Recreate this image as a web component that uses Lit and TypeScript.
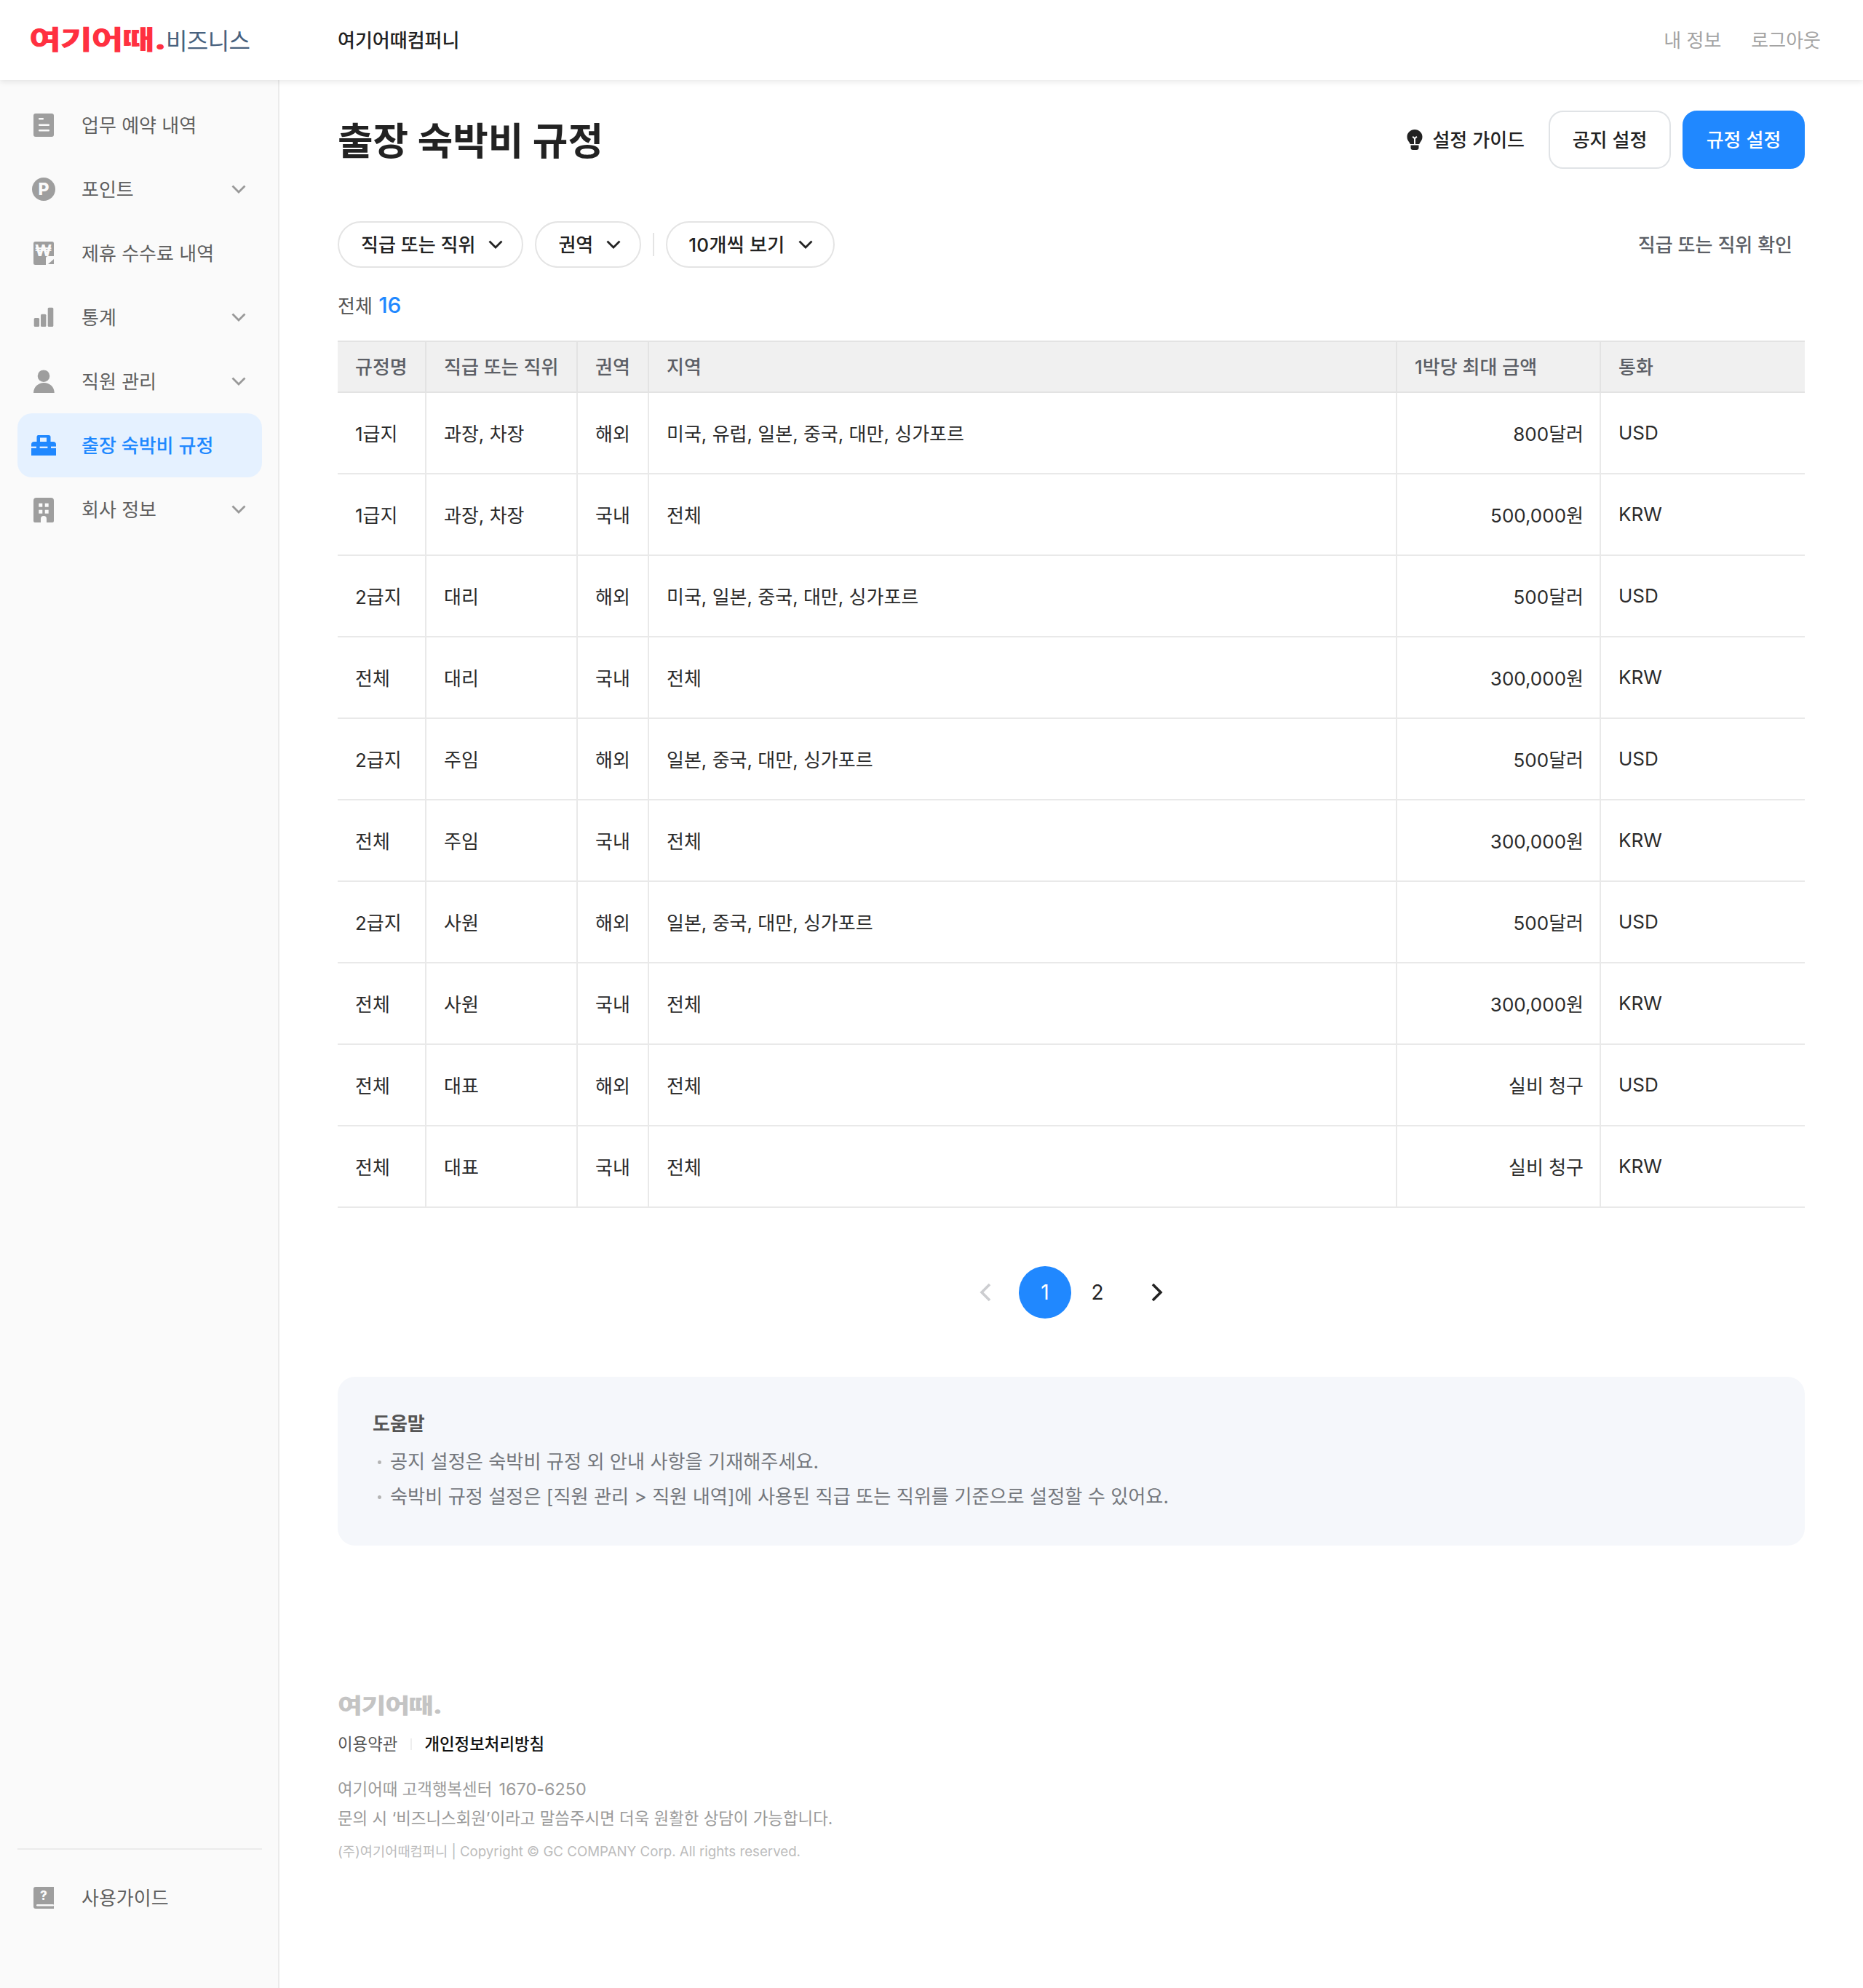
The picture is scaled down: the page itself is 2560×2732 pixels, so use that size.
import { LitElement, html, css, svg } from 'lit';
import { customElement } from 'lit/decorators.js';

const GRAY = '#9e9e9e';

const icons: Record<string, unknown> = {
  doc: svg`<rect x="10" y="8" width="28" height="32" rx="3" fill="${GRAY}"/>
    <rect x="17" y="14" width="7" height="2.4" rx="1" fill="#fafafa"/>
    <rect x="17" y="22.6" width="15" height="2.4" rx="1" fill="#fafafa"/>
    <rect x="17" y="30" width="15" height="2.4" rx="1" fill="#fafafa"/>`,
  point: svg`<circle cx="24" cy="24" r="16" fill="${GRAY}"/>
    <text x="24" y="32" text-anchor="middle" font-size="23" font-weight="800" fill="#fafafa">P</text>`,
  fee: svg`<rect x="10" y="8" width="28" height="32" rx="2.500" fill="${GRAY}"/>
    <path d="M30 28h8v12H27V31a3 3 0 0 1 3-3z" fill="#fafafa"/>
    <path d="M38 32v7h-8z" fill="${GRAY}"/>
    <text x="23.500" y="28" text-anchor="middle" font-size="22" font-weight="800" fill="#fafafa">₩</text>`,
  stats: svg`<rect x="10.7" y="25" width="7.4" height="12" rx="1.5" fill="${GRAY}"/>
    <rect x="20" y="19.7" width="7.4" height="17.3" rx="1.5" fill="${GRAY}"/>
    <rect x="29.7" y="10.7" width="7.6" height="26.3" rx="1.5" fill="${GRAY}"/>`,
  person: svg`<circle cx="24" cy="16.7" r="8.3" fill="${GRAY}"/>
    <path d="M10 40c0-8.500 7-14 14.300-14 7.700 0 14.400 5.500 14.400 14z" fill="${GRAY}"/>`,
  case: svg`<path fill-rule="evenodd" d="M16 10h15a2.500 2.500 0 0 1 2.500 2.500V19H37a4 4 0 0 1 4 4v15H7V23a4 4 0 0 1 4-4h3.500v-6.500A2.500 2.500 0 0 1 16 10zm3 3.500V19h9v-5.500z" fill="#2088ff"/>
    <rect x="7" y="25.600" width="34" height="2.300" fill="#e5f1ff"/>
    <rect x="14" y="23.500" width="4.600" height="6.400" fill="#2088ff"/>
    <rect x="29.400" y="23.500" width="4.600" height="6.400" fill="#2088ff"/>`,
  office: svg`<path d="M14 8h20a4 4 0 0 1 4 4v28a2 2 0 0 1-2 2h-8v-5a4 4 0 0 0-8 0v5h-8a2 2 0 0 1-2-2V12a4 4 0 0 1 4-4z" fill="${GRAY}"/>
    <rect x="17.300" y="15.700" width="5" height="5" fill="#fafafa"/>
    <rect x="25.700" y="15.700" width="5" height="5" fill="#fafafa"/>
    <rect x="17.300" y="24.700" width="5" height="5" fill="#fafafa"/>
    <rect x="25.700" y="24.700" width="5" height="5" fill="#fafafa"/>`,
  guide: svg`<path d="M13 9h25v30H13a3 3 0 0 1-3-3V12a3 3 0 0 1 3-3z" fill="${GRAY}"/>
    <rect x="14" y="33" width="24" height="2.600" rx="1.300" fill="#fafafa"/>
    <text x="24" y="27" text-anchor="middle" font-size="17" font-weight="800" fill="#fafafa">?</text>`,
};

const navItems = [
  { icon: 'doc', label: '업무 예약 내역' },
  { icon: 'point', label: '포인트', more: true },
  { icon: 'fee', label: '제휴 수수료 내역' },
  { icon: 'stats', label: '통계', more: true },
  { icon: 'person', label: '직원 관리', more: true },
  { icon: 'case', label: '출장 숙박비 규정', active: true },
  { icon: 'office', label: '회사 정보', more: true },
];

const rows = [
  ['1급지', '과장, 차장', '해외', '미국, 유럽, 일본, 중국, 대만, 싱가포르', '800달러', 'USD'],
  ['1급지', '과장, 차장', '국내', '전체', '500,000원', 'KRW'],
  ['2급지', '대리', '해외', '미국, 일본, 중국, 대만, 싱가포르', '500달러', 'USD'],
  ['전체', '대리', '국내', '전체', '300,000원', 'KRW'],
  ['2급지', '주임', '해외', '일본, 중국, 대만, 싱가포르', '500달러', 'USD'],
  ['전체', '주임', '국내', '전체', '300,000원', 'KRW'],
  ['2급지', '사원', '해외', '일본, 중국, 대만, 싱가포르', '500달러', 'USD'],
  ['전체', '사원', '국내', '전체', '300,000원', 'KRW'],
  ['전체', '대표', '해외', '전체', '실비 청구', 'USD'],
  ['전체', '대표', '국내', '전체', '실비 청구', 'KRW'],
];

const columns = ['규정명', '직급 또는 직위', '권역', '지역', '1박당 최대 금액', '통화'];
const columnClasses = ['c-name', 'c-rank', 'c-zone', 'c-area', 'c-max', 'c-cur'];

@customElement('app-root')
export class AppRoot extends LitElement {
  static styles = css`
    :host {
      display: block;
      min-height: 100vh;
      background: #fff;
      color: #222;
      font-family: Inter, 'Noto Sans CJK KR', sans-serif;
      font-size: 26px;
    }
    .page {
      display: flex;
      flex-direction: column;
      min-height: 100vh;
    }
    .lbl {
      margin-bottom: 3px;
    }
    header {
      height: 110px;
      flex: none;
      box-sizing: border-box;
      display: flex;
      align-items: center;
      padding: 0 58px 0 40px;
      background: #fff;
      box-shadow: 0 2px 8px rgba(0, 0, 0, 0.1);
      position: relative;
      z-index: 1;
    }
    .brand {
      display: flex;
      align-items: center;
      width: 424px;
      flex: none;
    }
    .logo {
      display: block;
      font-weight: 900;
      white-space: nowrap;
      transform-origin: left center;
      line-height: 1;
    }
    .logo.red {
      width: 188px;
      font-size: 38px;
      color: #ff3040;
      transform: scale(1.26, 0.95);
      letter-spacing: -1px;
    }
    .logo.gray {
      width: 146px;
      font-size: 29px;
      color: #c4c4c4;
      transform: scaleX(1.27);
      letter-spacing: -1px;
    }
    .biz {
      font-size: 32px;
      font-weight: 400;
      color: #47617e;
      letter-spacing: -0.600px;
      margin-bottom: 3px;
    }
    .company {
      font-weight: 500;
    }
    .account {
      margin-left: auto;
      display: flex;
      gap: 41px;
      color: #a3a3a3;
      margin-bottom: 3px;
    }
    .body {
      flex: 1;
      display: flex;
    }
    nav {
      width: 384px;
      flex: none;
      box-sizing: border-box;
      background: #fafafa;
      border-right: 2px solid #ebebeb;
      padding: 18px 22px 80px 24px;
      display: flex;
      flex-direction: column;
      justify-content: space-between;
    }
    .nav-foot {
      border-top: 2px solid #ebebeb;
      padding-top: 22px;
    }
    .item {
      height: 88px;
      box-sizing: border-box;
      display: flex;
      align-items: center;
      padding: 0 22px 0 12px;
      border-radius: 20px;
      color: #5f5f5f;
    }
    .item svg.icon {
      width: 48px;
      height: 48px;
      flex: none;
      margin-right: 28px;
      font-family: Inter, sans-serif;
    }
    .item .more {
      margin-left: auto;
    }
    .item.active {
      background: #e5f1ff;
      color: #2088ff;
      font-weight: 500;
    }
    main {
      flex: 1;
      min-width: 0;
      padding: 42px 80px 0;
    }
    .title-row {
      display: flex;
      align-items: center;
      height: 80px;
    }
    h1 {
      margin: 0 0 4px;
      font-size: 52.800px;
      font-weight: 700;
      color: #222;
    }
    .actions {
      margin-left: auto;
      display: flex;
      align-items: center;
    }
    .help-link {
      display: flex;
      align-items: center;
      gap: 13px;
      margin-right: 33px;
      font-weight: 500;
    }
    .btn {
      width: 168px;
      height: 80px;
      box-sizing: border-box;
      display: flex;
      align-items: center;
      justify-content: center;
      padding-bottom: 3px;
      border-radius: 20px;
      border: 2px solid #e0e3e6;
      font-weight: 500;
    }
    .btn.primary {
      margin-left: 16px;
      background: #2088ff;
      border-color: #2088ff;
      color: #fff;
    }
    .filters {
      display: flex;
      align-items: center;
      margin-top: 72px;
      height: 64px;
    }
    .pill {
      height: 64px;
      box-sizing: border-box;
      display: flex;
      align-items: center;
      gap: 18px;
      padding: 0 26px 0 30px;
      border: 2px solid #e4e4e4;
      border-radius: 32px;
      font-weight: 500;
      margin-right: 16px;
    }
    .pill.count-size {
      padding-right: 28px;
      padding-left: 29px;
    }
    .pill.count-size .lbl {
      letter-spacing: 0.300px;
    }
    .divider {
      width: 2px;
      height: 32px;
      background: #e4e4e4;
      margin-right: 16px;
    }
    .check {
      margin-left: auto;
      margin-right: 17px;
      color: #5c5f66;
      font-weight: 500;
    }
    .count {
      margin-top: 36px;
      height: 32px;
      line-height: 32px;
      color: #555;
    }
    .count b {
      margin-left: 1px;
      font-size: 30px;
      line-height: 1;
      font-weight: 500;
      color: #2088ff;
    }
    table {
      width: 100%;
      margin-top: 32px;
      table-layout: fixed;
      border-collapse: separate;
      border-spacing: 0;
    }
    th,
    td {
      box-sizing: border-box;
      padding: 0 24px 0;
      text-align: left;
      border-right: 2px solid #e9e9e9;
      border-bottom: 2px solid #e9e9e9;
      white-space: nowrap;
    }
    th:last-child,
    td:last-child {
      border-right: 0;
    }
    th {
      height: 72px;
      padding-bottom: 3px;
      background: #f0f0f0;
      border-color: #e3e3e3;
      border-top: 2px solid #e3e3e3;
      color: #5c5f66;
      font-weight: 500;
    }
    td {
      height: 112px;
      padding-bottom: 1px;
      color: #2b2b2b;
    }
    .c-name { width: 122px; }
    .c-rank { width: 208px; }
    .c-zone { width: 98px; }
    .c-max { width: 280px; }
    .c-cur { width: 280px; }
    td.c-max {
      text-align: right;
      padding-right: 22px;
    }
    .pager {
      display: flex;
      justify-content: center;
      align-items: center;
      margin-top: 80px;
      font-size: 28px;
    }
    .pager span {
      width: 72px;
      height: 72px;
      display: flex;
      align-items: center;
      justify-content: center;
      border-radius: 50%;
    }
    .pager .arrow.prev {
      margin-right: 10px;
    }
    .pager .arrow.next {
      margin-left: 10px;
    }
    .pager .current {
      background: #2088ff;
      color: #fff;
    }
    .tips {
      margin-top: 80px;
      height: 232px;
      box-sizing: border-box;
      padding: 47px 48px 0;
      border-radius: 24px;
      background: #f5f7fb;
      color: #74777d;
      font-size: 26.200px;
    }
    .tips h2 {
      margin: 0 0 10px;
      font-size: 26px;
      line-height: 36px;
      font-weight: 700;
      color: #555;
    }
    .tips ul {
      margin: 0;
      padding: 0;
      list-style: none;
    }
    .tips li {
      line-height: 48px;
      padding-left: 24px;
      position: relative;
    }
    .tips li::before {
      content: '';
      position: absolute;
      left: 7px;
      top: 22px;
      width: 5px;
      height: 5px;
      border-radius: 50%;
      background: #b4b4b4;
    }
    footer {
      margin-top: 206px;
      font-size: 22.400px;
      color: #9a9a9a;
    }
    .terms {
      display: flex;
      align-items: center;
      margin-top: 20px;
      color: #555;
      line-height: 36px;
    }
    .terms i {
      width: 2px;
      height: 16px;
      margin: 0 17px 0 18px;
      background: #eee;
    }
    .terms b {
      color: #111;
      font-weight: 500;
    }
    .contact {
      margin-top: 24px;
      line-height: 40px;
    }
    .tel {
      margin-left: 3px;
      font-size: 23.400px;
    }
    .copy {
      margin-top: 10px;
      font-size: 18.700px;
      line-height: 32px;
      color: #bcbcbc;
    }
  `;

  chevron(color: string) {
    return html`<svg class="more" width="20" height="12" viewBox="0 0 20 12" fill="none">
      <path d="M1.500 1.500 10 10l8.500-8.500" stroke=${color} stroke-width="2.800" />
    </svg>`;
  }

  navItem(it: { icon: string; label: string; more?: boolean; active?: boolean }) {
    return html`<div class="item ${it.active ? 'active' : ''}">
      <svg class="icon" viewBox="0 0 48 48">${icons[it.icon]}</svg>
      <span class="lbl">${it.label}</span>
      ${it.more ? this.chevron('#999') : ''}
    </div>`;
  }

  pill(label: string, extra = '') {
    return html`<div class="pill ${extra}"><span class="lbl">${label}</span>${this.chevron('#222')}</div>`;
  }

  render() {
    return html`<div class="page">
      <header>
        <div class="brand">
          <span class="logo red">여기어때.</span>
          <span class="biz">비즈니스</span>
        </div>
        <span class="company lbl">여기어때컴퍼니</span>
        <div class="account"><span>내 정보</span><span>로그아웃</span></div>
      </header>
      <div class="body">
        <nav>
          <div>${navItems.map((it) => this.navItem(it))}</div>
          <div class="nav-foot">${this.navItem({ icon: 'guide', label: '사용가이드' })}</div>
        </nav>
        <main>
          <div class="title-row">
            <h1>출장 숙박비 규정</h1>
            <div class="actions">
              <div class="help-link">
                <svg width="22" height="28" viewBox="0 0 22 28">
                  <path
                    fill-rule="evenodd"
                    d="M11 0c5.800 0 10.500 4.500 10.500 10 0 3.600-1.600 5.800-3.200 8-.5.700-.8 1.300-1 2H4.700c-.2-.7-.5-1.300-1-2C2.100 15.800.500 13.600.500 10 .500 4.500 5.200 0 11 0zM7.500 10.500l2.500 2.200V20h2v-7.300l2.500-2.200-1.300-1.400L11 11l-2.200-1.900z"
                    fill="#222"
                  />
                  <path d="M5.500 21.500h11V25a3 3 0 0 1-3 3h-5a3 3 0 0 1-3-3z" fill="#222" />
                </svg>
                <span class="lbl">설정 가이드</span>
              </div>
              <div class="btn">공지 설정</div>
              <div class="btn primary">규정 설정</div>
            </div>
          </div>
          <div class="filters">
            ${this.pill('직급 또는 직위')} ${this.pill('권역')}
            <div class="divider"></div>
            ${this.pill('10개씩 보기', 'count-size')}
            <span class="check lbl">직급 또는 직위 확인</span>
          </div>
          <div class="count">전체 <b>16</b></div>
          <table>
            <thead>
              <tr>${columns.map((c, i) => html`<th class=${columnClasses[i]}>${c}</th>`)}</tr>
            </thead>
            <tbody>
              ${rows.map(
                (r) => html`<tr>${r.map((v, i) => html`<td class=${columnClasses[i]}>${v}</td>`)}</tr>`
              )}
            </tbody>
          </table>
          <div class="pager">
            <span class="arrow prev">
              <svg width="16" height="26" viewBox="0 0 16 26" fill="none">
                <path d="M14 2 3 13l11 11" stroke="#cccdd0" stroke-width="3.600" />
              </svg>
            </span>
            <span class="current">1</span>
            <span>2</span>
            <span class="arrow next">
              <svg width="16" height="26" viewBox="0 0 16 26" fill="none">
                <path d="m2 2 11 11L2 24" stroke="#222" stroke-width="3.600" />
              </svg>
            </span>
          </div>
          <section class="tips">
            <h2>도움말</h2>
            <ul>
              <li>공지 설정은 숙박비 규정 외 안내 사항을 기재해주세요.</li>
              <li>숙박비 규정 설정은 [직원 관리 > 직원 내역]에 사용된 직급 또는 직위를 기준으로 설정할 수 있어요.</li>
            </ul>
          </section>
          <footer>
            <span class="logo gray">여기어때.</span>
            <div class="terms"><span>이용약관</span><i></i><b>개인정보처리방침</b></div>
            <div class="contact">
              <div>여기어때 고객행복센터 <span class="tel">1670-6250</span></div>
              <div>문의 시 ‘비즈니스회원’이라고 말씀주시면 더욱 원활한 상담이 가능합니다.</div>
            </div>
            <div class="copy">(주)여기어때컴퍼니 | Copyright © GC COMPANY Corp. All rights reserved.</div>
          </footer>
        </main>
      </div>
    </div>`;
  }
}
